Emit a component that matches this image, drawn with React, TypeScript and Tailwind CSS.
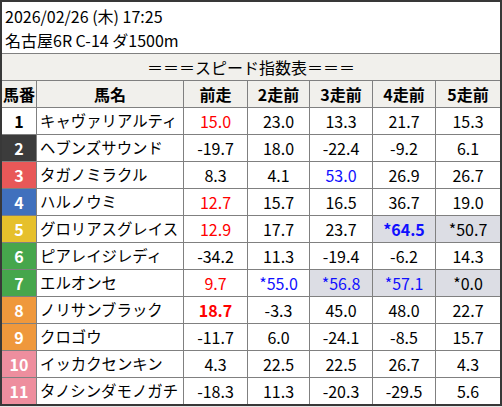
import React from 'react';

type Cell = {v: string; c?: 'red' | 'blue'; b?: boolean; hl?: boolean};

const horses: {no: number; bg: string; fg: string; name: string; vals: Cell[]}[] = [
  {no: 1, bg: 'bg-white', fg: 'text-black', name: 'キャヴァリアルティ', vals: [{v: '15.0', c: 'red'}, {v: '23.0'}, {v: '13.3'}, {v: '21.7'}, {v: '15.3'}]},
  {no: 2, bg: 'bg-[#3c3c3c]', fg: 'text-white', name: 'ヘブンズサウンド', vals: [{v: '-19.7'}, {v: '18.0'}, {v: '-22.4'}, {v: '-9.2'}, {v: '6.1'}]},
  {no: 3, bg: 'bg-[#e85858]', fg: 'text-white', name: 'タガノミラクル', vals: [{v: '8.3'}, {v: '4.1'}, {v: '53.0', c: 'blue'}, {v: '26.9'}, {v: '26.7'}]},
  {no: 4, bg: 'bg-[#4070bd]', fg: 'text-white', name: 'ハルノウミ', vals: [{v: '12.7', c: 'red'}, {v: '15.7'}, {v: '16.5'}, {v: '36.7'}, {v: '19.0'}]},
  {no: 5, bg: 'bg-[#e6c02c]', fg: 'text-white', name: 'グロリアスグレイス', vals: [{v: '12.9', c: 'red'}, {v: '17.7'}, {v: '23.7'}, {v: '*64.5', c: 'blue', b: true, hl: true}, {v: '*50.7', hl: true}]},
  {no: 6, bg: 'bg-[#46a64c]', fg: 'text-white', name: 'ピアレイジレディ', vals: [{v: '-34.2'}, {v: '11.3'}, {v: '-19.4'}, {v: '-6.2'}, {v: '14.3'}]},
  {no: 7, bg: 'bg-[#46a64c]', fg: 'text-white', name: 'エルオンセ', vals: [{v: '9.7', c: 'red'}, {v: '*55.0', c: 'blue'}, {v: '*56.8', c: 'blue', hl: true}, {v: '*57.1', c: 'blue', hl: true}, {v: '*0.0', hl: true}]},
  {no: 8, bg: 'bg-[#ef983c]', fg: 'text-white', name: 'ノリサンブラック', vals: [{v: '18.7', c: 'red', b: true}, {v: '-3.3'}, {v: '45.0'}, {v: '48.0'}, {v: '22.7'}]},
  {no: 9, bg: 'bg-[#ef983c]', fg: 'text-white', name: 'クロゴウ', vals: [{v: '-11.7'}, {v: '6.0'}, {v: '-24.1'}, {v: '-8.5'}, {v: '15.7'}]},
  {no: 10, bg: 'bg-[#ee8e9e]', fg: 'text-white', name: 'イッカクセンキン', vals: [{v: '4.3'}, {v: '22.5'}, {v: '22.5'}, {v: '26.7'}, {v: '4.3'}]},
  {no: 11, bg: 'bg-[#ee8e9e]', fg: 'text-white', name: 'タノシンダモノガチ', vals: [{v: '-18.3'}, {v: '11.3'}, {v: '-20.3'}, {v: '-29.5'}, {v: '5.6'}]},
];

const cols = 'grid grid-cols-[35px_147px_64px_62px_63px_63px_64px]';
const heads = ['馬番', '馬名', '前走', '2走前', '3走前', '4走前', '5走前'];

export default function App(): React.JSX.Element {
  return (
    <div className="h-[407px] w-[502px] bg-[#e6e6e6] font-['Noto_Sans_CJK_JP',sans-serif] text-[16px] leading-none text-black">
      <div className="h-[406px] w-[502px] overflow-hidden border-2 border-[#383838] bg-white">
        {/* race info */}
        <div className="flex h-[51px] flex-col justify-center gap-[8px] pl-[3px]">
          <div>2026/02/26 (木) 17:25</div>
          <div>名古屋6R C-14 ダ1500m</div>
        </div>

        {/* title */}
        <div className="flex h-[27px] items-center justify-center border-t border-[#808080] bg-[#f1f0ec]">
          ＝＝＝スピード指数表＝＝＝
        </div>

        {/* header */}
        <div className={`${cols} h-[27px] border-t border-[#808080] bg-[#f1f0ec] font-bold`}>
          {heads.map((h, i) => (
            <div
              key={h}
              className={`flex items-center justify-center ${i < 6 ? 'border-r border-[#808080]' : ''}`}>
              {h}
            </div>
          ))}
        </div>

        {/* rows */}
        {horses.map(r => (
          <div key={r.no} className={`${cols} h-[27px] border-t border-[#808080]`}>
            <div className={`flex items-center justify-center border-r border-[#808080] font-bold ${r.bg} ${r.fg}`}>
              {r.no}
            </div>
            <div className="flex items-center overflow-hidden border-r border-[#808080] pl-[3px] text-[15.4px] whitespace-nowrap">
              {r.name}
            </div>
            {r.vals.map((c, i) => (
              <div
                key={i}
                className={`flex items-center justify-center whitespace-nowrap ${i < 4 ? 'border-r border-[#808080]' : ''} ${c.hl ? 'bg-[#dcdde4]' : ''} ${c.c === 'red' ? 'text-[#ff0000]' : c.c === 'blue' ? 'text-[#1010ff]' : ''} ${c.b ? 'font-bold' : ''}`}>
                {c.v}
              </div>
            ))}
          </div>
        ))}
      </div>
    </div>
  );
}
